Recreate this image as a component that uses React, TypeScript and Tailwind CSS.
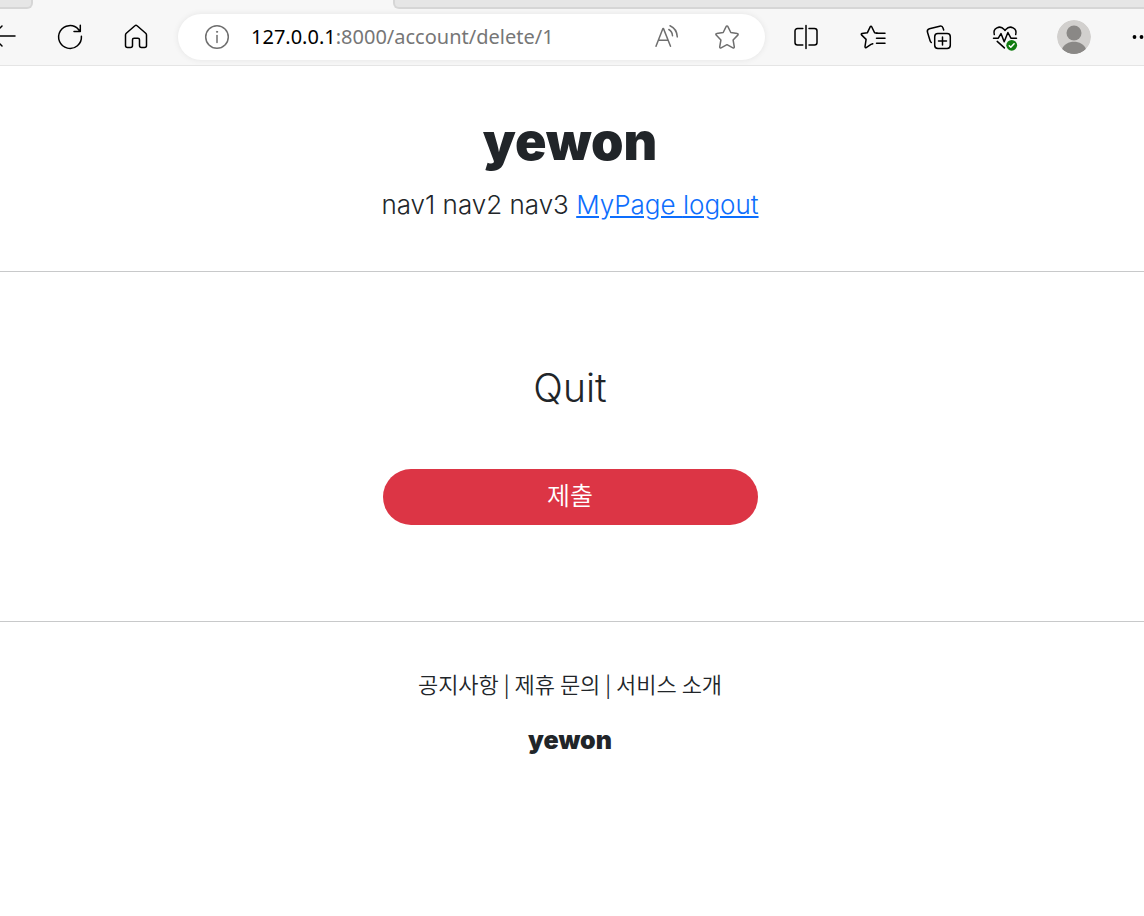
import type { ReactNode } from "react";

type ToolProps = { label: string; className?: string; children: ReactNode };

function Tool({ label, className = "w-[66px]", children }: ToolProps) {
  return (
    <button type="button" aria-label={label} className={`flex h-11 shrink-0 items-center justify-center ${className}`}>
      {children}
    </button>
  );
}

const line = {
  fill: "none",
  stroke: "currentColor",
  strokeWidth: 1.5,
  strokeLinecap: "round" as const,
  strokeLinejoin: "round" as const,
};

function BackIcon() {
  return (
    <svg width="28" height="28" viewBox="0 0 28 28" {...line}>
      <path d="M25 13H2M12 3 2 13l10 10" />
    </svg>
  );
}

function RefreshIcon() {
  return (
    <svg width="28" height="28" viewBox="0 0 28 28" {...line}>
      <path d="M25.4 13.2A11.4 11.4 0 1 1 22.5 6.4L24.3 8.5M24.3 2.3v6.3h-6.3" />
    </svg>
  );
}

function HomeIcon() {
  return (
    <svg width="28" height="28" viewBox="0 0 28 28" {...line}>
      <path d="M12.9 2.8a1.6 1.6 0 0 1 2.2 0l8.6 7.5c.5.5.8 1.1.8 1.8v10.4c0 1.2-.8 2-2 2h-3c-1.200 0-2-.8-2-2v-5.700c0-.9-.7-1.600-1.600-1.600h-3.800c-.9 0-1.600.7-1.600 1.600v5.700c0 1.200-.8 2-2 2h-3c-1.200 0-2-.8-2-2V12.100c0-.7.3-1.300.8-1.800z" />
    </svg>
  );
}

function InfoIcon() {
  return (
    <svg width="28" height="28" viewBox="0 0 28 28" {...line}>
      <circle cx="14" cy="14" r="11.3" />
      <path d="M14 12.500v7" />
      <circle cx="14" cy="8.800" r="0.600" fill="currentColor" strokeWidth="1" />
    </svg>
  );
}

function ReadAloudIcon() {
  return (
    <svg width="28" height="28" viewBox="0 0 28 28" {...line}>
      <path d="M3 23.200 9.900 5.600h.6l7 17.600M5.600 17.200h9.400" />
      <path d="M15.800 6.500c2.200 1.200 3.500 3.400 3.700 6.200M17 2.800c4.400 1.900 7 5.900 7.300 11.100" />
    </svg>
  );
}

function StarIcon() {
  return (
    <svg width="28" height="28" viewBox="0 0 28 28" {...line}>
      <path d="M13.200 3.400c.3-.7 1.300-.7 1.600 0l3 6.100 6.500 1c.8.1 1.100 1 .5 1.600l-4.700 4.900 1.200 6.900c.1.8-.7 1.300-1.400 1L14 21.700l-5.900 3.200c-.7.3-1.500-.2-1.400-1L7.900 17l-4.700-4.900c-.6-.6-.3-1.500.5-1.600l6.500-1z" />
    </svg>
  );
}

function SplitIcon() {
  return (
    <svg width="28" height="28" viewBox="0 0 28 28" {...line}>
      <path d="M10.800 5.500H5.500A2.500 2.500 0 0 0 3 8v11.500A2.500 2.500 0 0 0 5.500 22h5.300M17 5.500h5.500A2.500 2.500 0 0 1 25 8v11.500a2.500 2.500 0 0 1-2.500 2.500H17M14 2.500v23" />
    </svg>
  );
}

function FavoritesIcon() {
  return (
    <svg width="28" height="28" viewBox="0 0 28 28" {...line}>
      <path d="M17.500 10.200 14.800 9.800 11.900 3.700c-.3-.6-1.100-.6-1.400 0l-3 6.100-5.300.7c-.7.1-1 .9-.5 1.400l4.600 4.500-1.100 7.300c-.1.700.600 1.200 1.200.9l4.800-3.200 1.800-.7" transform="translate(.8)" />
      <path d="M17.500 10.300h8.500M17.500 15.300h8.500M17.500 20.300h8.500" />
    </svg>
  );
}

function CollectionsIcon() {
  return (
    <svg width="28" height="28" viewBox="0 0 28 28" {...line}>
      <rect x="9.700" y="10.500" width="15.600" height="15" rx="3.200" />
      <path d="M17.500 14v8M13.500 18h8" />
      <path d="M6.300 19.500a4 4 0 0 1-1.300-2L2.500 9.300c-.5-1.600.3-3.100 1.900-3.600l10.300-2.500c1.600-.4 2.900.4 3.300 1.900l.7 2" />
    </svg>
  );
}

function HealthIcon() {
  return (
    <svg width="28" height="28" viewBox="0 0 28 28" {...line}>
      <path d="M3.300 11.600C1.500 5.500 8.800 1.500 13.200 6.500l.8.900.8-.9c4.400-5 11.700-1 9.900 5.100" />
      <path d="M2.500 15.200h4.800l2.700-4.600 3.200 8.200 3.700-9.300 3 5.700H25.500M6.200 18.400l7.200 6.500" />
      <circle cx="20.700" cy="22.300" r="5.400" fill="#107c10" stroke="none" />
      <path d="m18.300 22.800 1.500 1.500 3.300-3.500" stroke="#fff" />
    </svg>
  );
}

function AvatarIcon() {
  return (
    <svg width="34" height="34" viewBox="0 0 34 34" className="overflow-hidden rounded-full">
      <circle cx="17" cy="17" r="17" fill="#d2d0ce" />
      <circle cx="17" cy="13" r="7.500" fill="#8a8886" />
      <path d="M5 29.300c3.200-10 20.800-10 24 0A17 17 0 0 1 5 29.300z" fill="#8a8886" />
    </svg>
  );
}

function MoreIcon() {
  return (
    <svg width="24" height="24" viewBox="0 0 24 24" fill="currentColor">
      <circle cx="5.500" cy="12" r="1.900" />
      <circle cx="12.500" cy="12" r="1.900" />
      <circle cx="19.500" cy="12" r="1.900" />
    </svg>
  );
}

function BrowserBar() {
  return (
    <div className="overflow-hidden border-b border-[#e5e5e5] bg-[#f7f7f7] text-black">
      <div className="flex h-[9px]">
        <div className="w-[33px] rounded-br-md border-r-2 border-b-2 border-[#d6d6d6] bg-[#e6e6e6]" />
        <div className="w-[360px]" />
        <div className="flex-1 rounded-bl-md border-b-2 border-l-2 border-[#d6d6d6] bg-[#e6e6e6]" />
      </div>
      <div className="-mr-7 -ml-[29px] flex h-14 items-center">
        <Tool label="Back"><BackIcon /></Tool>
        <Tool label="Refresh"><RefreshIcon /></Tool>
        <Tool label="Home"><HomeIcon /></Tool>
        <div className="mr-2 ml-[9px] flex h-[46px] min-w-0 flex-1 items-center rounded-full bg-white pr-2 pl-[25px] text-[#6f6f6f] shadow-[0_0_6px_rgba(0,0,0,0.08)]">
          <button type="button" aria-label="Site information" className="shrink-0"><InfoIcon /></button>
          <div className="min-w-0 flex-1 truncate pl-5 font-['Noto_Sans',sans-serif] text-[20px] leading-7 font-normal text-[#767676]">
            <span className="text-black">127.0.0.1</span>:8000/account/delete/1
          </div>
          <Tool label="Read aloud" className="w-[60px]"><ReadAloudIcon /></Tool>
          <Tool label="Add to favorites" className="w-[60px]"><StarIcon /></Tool>
        </div>
        <Tool label="Split screen"><SplitIcon /></Tool>
        <Tool label="Favorites" className="w-[67px]"><FavoritesIcon /></Tool>
        <Tool label="Collections"><CollectionsIcon /></Tool>
        <Tool label="Browser essentials"><HealthIcon /></Tool>
        <Tool label="Profile" className="w-[72px]"><AvatarIcon /></Tool>
        <Tool label="More" className="w-[62px]"><MoreIcon /></Tool>
      </div>
    </div>
  );
}

export default function App() {
  return (
    <div className="min-h-screen bg-white font-['Inter','Noto_Sans_CJK_KR',sans-serif] font-light text-[#212529]">
      <BrowserBar />
      <header className="border-b border-[#c8c9ca] pt-11 pr-1 pb-[46px] text-center">
        <h1 className="font-['Inter',sans-serif] text-[52px] leading-16 font-black">yewon</h1>
        <nav className="mt-[11px] text-[26px] leading-10">
          <span>nav1</span> <span>nav2</span> <span>nav3</span>{" "}
          <a href="#mypage" className="text-[#0d6efd] underline">MyPage </a>
          <a href="#logout" className="text-[#0d6efd] underline">logout</a>
        </nav>
      </header>
      <main className="border-b border-[#c8c9ca] pt-[92px] pr-1 pb-24 text-center">
        <h2 className="text-[39px] leading-12">Quit</h2>
        <form className="mt-[57px]" onSubmit={(e) => e.preventDefault()}>
          <button type="submit" className="h-14 w-[375px] max-w-full rounded-full bg-[#dc3545] text-[25px] font-[350] text-white">
            제출
          </button>
        </form>
      </main>
      <footer className="pt-[45px] pr-1 text-center">
        <p className="font-['Noto_Sans_CJK_KR',sans-serif] text-[22px] leading-8 font-[350]">공지사항 | 제휴 문의 | 서비스 소개</p>
        <p className="mt-[25px] font-['Inter',sans-serif] text-[25px] leading-8 font-black">yewon</p>
      </footer>
    </div>
  );
}
